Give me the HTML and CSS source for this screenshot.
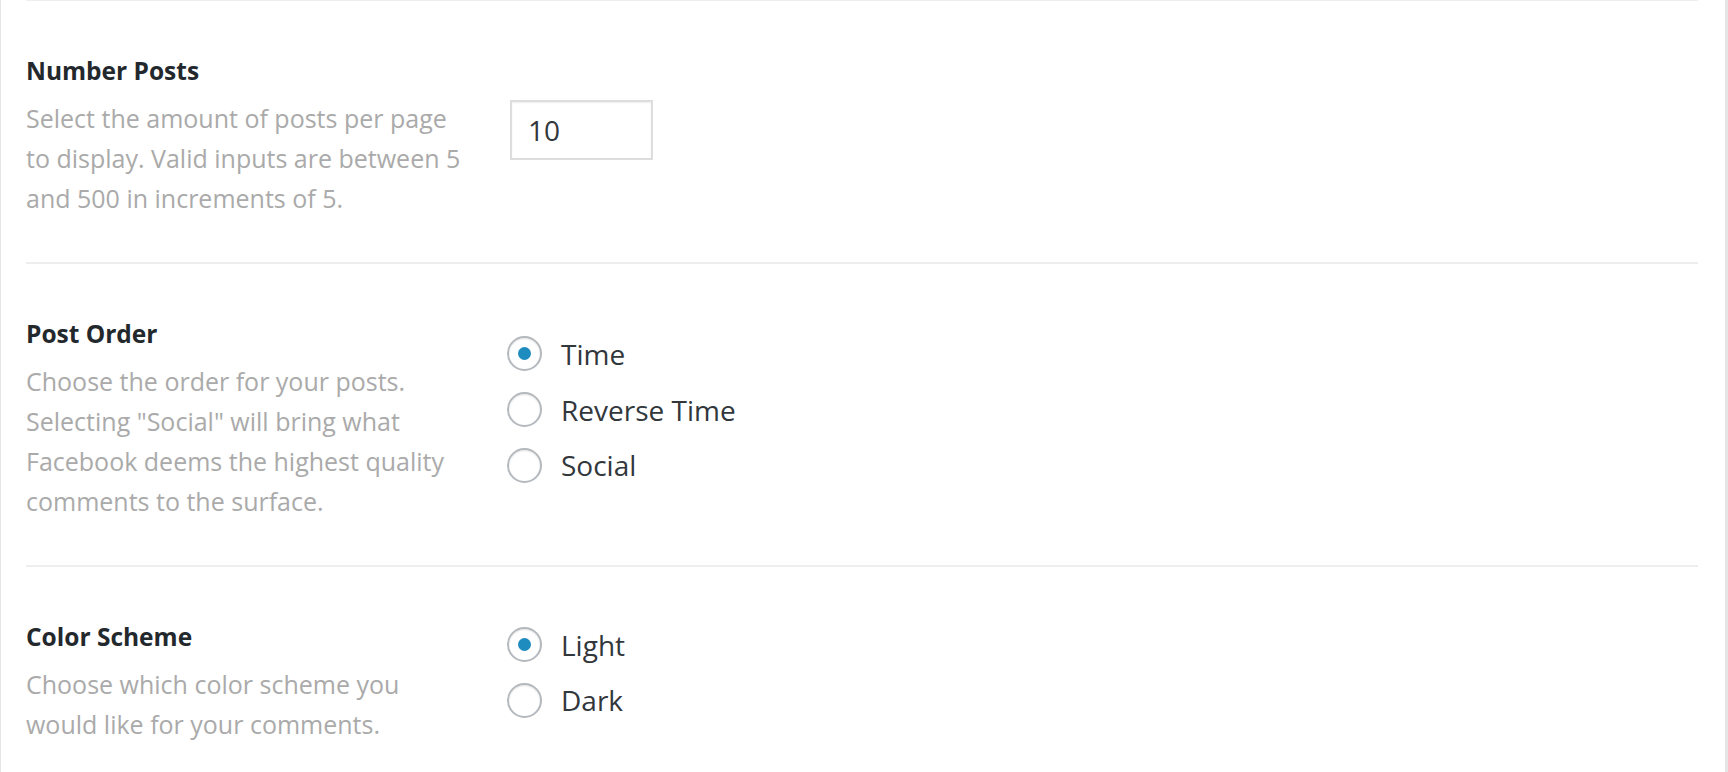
FILE: index.html
```html
<!DOCTYPE html>
<html lang="en">
<head>
<meta charset="utf-8">
<title>Comment Settings</title>
<link rel="stylesheet" href="styles.css">
</head>
<body>
<div class="panel">
  <div class="rows">
    <div class="row">
      <div class="info">
        <h3 class="title">Number Posts</h3>
        <p class="desc">Select the amount of posts per page to display. Valid inputs are between 5 and 500 in increments of 5.</p>
      </div>
      <div class="control">
        <input class="num" type="text" value="10">
      </div>
    </div>
    <div class="row">
      <div class="info">
        <h3 class="title">Post Order</h3>
        <p class="desc">Choose the order for your posts. Selecting "Social" will bring what Facebook deems the highest quality comments to the surface.</p>
      </div>
      <div class="control">
        <label class="opt"><span class="radio checked"></span><span class="opt-text">Time</span></label>
        <label class="opt"><span class="radio"></span><span class="opt-text">Reverse Time</span></label>
        <label class="opt"><span class="radio"></span><span class="opt-text">Social</span></label>
      </div>
    </div>
    <div class="row">
      <div class="info">
        <h3 class="title">Color Scheme</h3>
        <p class="desc">Choose which color scheme you would like for your comments.</p>
      </div>
      <div class="control">
        <label class="opt"><span class="radio checked"></span><span class="opt-text">Light</span></label>
        <label class="opt"><span class="radio"></span><span class="opt-text">Dark</span></label>
      </div>
    </div>
  </div>
</div>
</body>
</html>
```
FILE: styles.css
```css
html, body {
  margin: 0;
  padding: 0;
  background: #fff;
}
body {
  font-family: "Open Sans", "Noto Sans", sans-serif;
  height: 772px;
  overflow: hidden;
}
.panel {
  box-sizing: border-box;
  width: 1728px;
  min-height: 772px;
  border-left: 1px solid #e5e5e5;
  border-right: 3px solid #e5e5e5;
  padding: 0 27px 0 25px;
  background: #fff;
}
.rows {
  border-top: 1px solid #eeeeee;
}
.row {
  display: flex;
  align-items: center;
  padding: 41px 0 44px;
  border-bottom: 2px solid #eeeeee;
}
.info {
  flex: 0 0 450px;
  padding-top: 14px;
}
.title {
  margin: 0;
  font-size: 24.5px;
  line-height: 30px;
  font-weight: 700;
  color: #23282d;
}
.desc {
  margin: 12px 0 0;
  font-size: 25px;
  line-height: 40px;
  color: #aaaaaa;
}
.control {
  margin-left: 31px;
  margin-bottom: 7px;
  display: flex;
  flex-direction: column;
}
.num {
  box-sizing: border-box;
  width: 143px;
  height: 60px;
  margin: 6px 0 0 3px;
  padding: 0 16px;
  border: 2px solid #dddddd;
  box-shadow: inset 0 1px 2px rgba(0, 0, 0, 0.07);
  font-family: "Open Sans", "Noto Sans", sans-serif;
  font-size: 28px;
  color: #32373c;
  outline: none;
}
.opt {
  display: flex;
  align-items: center;
  height: 55.7px;
  cursor: pointer;
}
.radio {
  box-sizing: border-box;
  width: 35px;
  height: 35px;
  flex: 0 0 35px;
  border: 2px solid #b4b9be;
  border-radius: 50%;
  background: #fff;
  box-shadow: inset 0 1px 2px rgba(0, 0, 0, 0.1);
  display: flex;
  align-items: center;
  justify-content: center;
}
.radio.checked::before {
  content: "";
  width: 13px;
  height: 13px;
  border-radius: 50%;
  background: #1e8cbe;
}
.opt-text {
  margin-left: 19px;
  font-size: 28px;
  line-height: 34px;
  color: #32373c;
}
```
